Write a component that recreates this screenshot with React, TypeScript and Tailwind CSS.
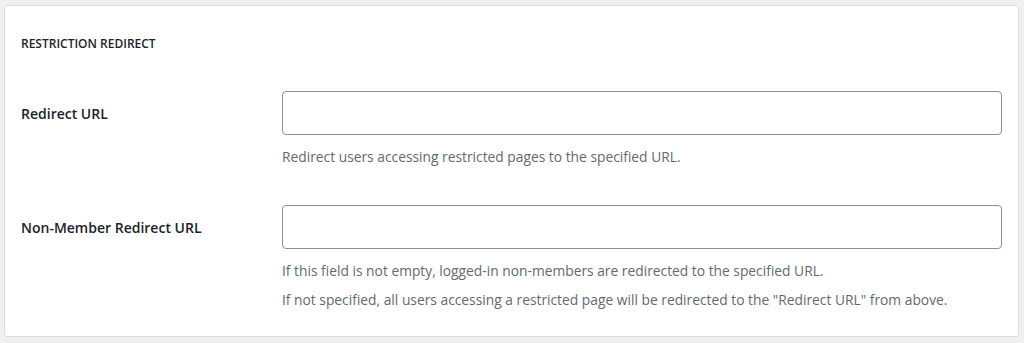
import React from 'react';

const fieldFont = { fontFamily: '"Open Sans", "Noto Sans", sans-serif' };

const Field = ({ label, help }: { label: string; help: string[] }) => (
  <div className="flex">
    <div className="w-[261px] shrink-0 flex items-center h-[44px] text-[14px] font-semibold text-[#1d2327]">
      {label}
    </div>
    <div className="flex-1">
      <input type="text" className="block w-[720px] h-[44px] rounded-[4px] border border-[#8c8f94] bg-white px-2 outline-none" />
      <div className="mt-[12px] flex flex-col gap-[9px] text-[13.8px] text-[#646970] leading-[20px]">
        {help.map((h) => (
          <p key={h}>{h}</p>
        ))}
      </div>
    </div>
  </div>
);

export default function App() {
  return (
    <div className="w-[1024px] h-[343px] bg-[#f0f0f1] pt-[5px] pl-[4px]" style={fieldFont}>
      <div className="w-[1015px] h-[332px] bg-white border border-[#dcdcde] rounded-[3px] pl-[16px] pt-[30px]">
        <h3 className="text-[12px] font-semibold uppercase text-[#1d2327] leading-[16px]">Restriction Redirect</h3>
        <div className="mt-[39px] flex flex-col gap-[38px]">
          <Field label="Redirect URL" help={['Redirect users accessing restricted pages to the specified URL.']} />
          <Field
            label="Non-Member Redirect URL"
            help={[
              'If this field is not empty, logged-in non-members are redirected to the specified URL.',
              'If not specified, all users accessing a restricted page will be redirected to the "Redirect URL" from above.',
            ]}
          />
        </div>
      </div>
    </div>
  );
}
